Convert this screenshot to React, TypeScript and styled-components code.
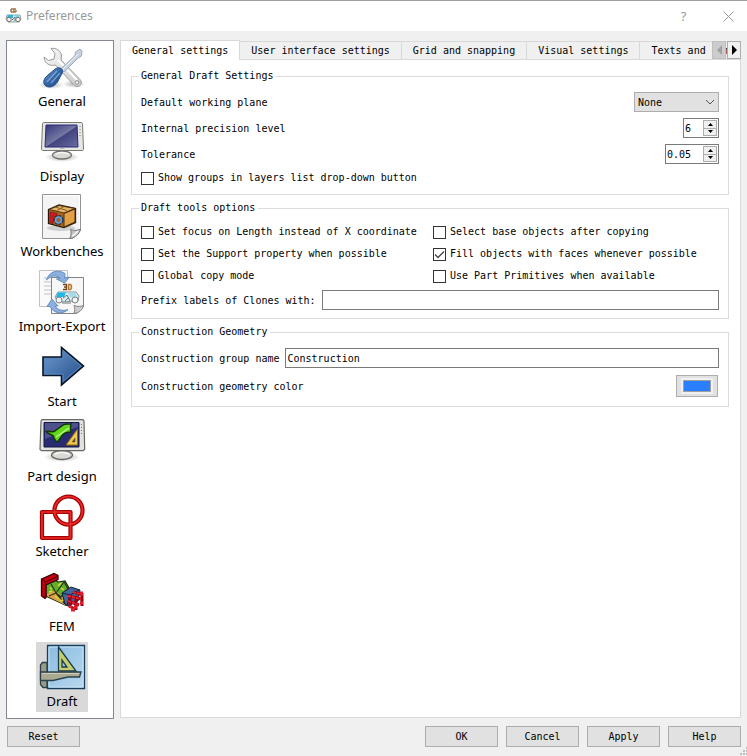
import React, { useState } from "react";
import styled, { createGlobalStyle } from "styled-components";

const mono = `"DejaVu Sans Mono", "Liberation Mono", monospace`;
const ui = `"Noto Sans", "Open Sans", sans-serif`;

const GlobalStyle = createGlobalStyle`
  *, *::before, *::after { box-sizing: border-box; }
  body { margin: 0; background: #f0f0f0; }
  button, input, select { font: inherit; color: inherit; margin: 0; }
`;

const Dialog = styled.div`
  display: flex;
  flex-direction: column;
  min-height: 100vh;
  background: #f0f0f0;
  border-top: 1px solid #a0a0a0;
  color: #000;
  font: 10px/14px ${mono};
`;

const TitleBar = styled.header`
  display: flex;
  align-items: center;
  height: 30px;
  padding: 0 5px;
  background: #fff;
  color: #999;
  font-family: ${ui};
`;

const Title = styled.h1`
  flex: 1;
  margin: 0 0 0 4px;
  font-size: 12px;
  font-weight: 400;
`;

const CaptionButton = styled.button`
  display: flex;
  align-items: center;
  justify-content: center;
  width: 45px;
  height: 28px;
  padding: 0;
  border: 0;
  background: none;
  font-size: 13px;
  &:last-child { width: 28px; margin-left: 8px; }
`;

const Body = styled.main`
  flex: 1;
  display: flex;
  gap: 6px;
  padding: 9px 6px 0;
`;

const Sidebar = styled.nav`
  flex: none;
  display: flex;
  flex-direction: column;
  align-items: center;
  gap: 5px;
  width: 108px;
  padding: 1px 0 6px 4px;
  border: 1px solid #828790;
  background: #fff;
`;

const PageButton = styled.button<{ $active: boolean }>`
  display: flex;
  flex-direction: column;
  align-items: center;
  min-width: 52px;
  height: 70px;
  padding: 2px;
  border: 0;
  background: ${(p) => (p.$active ? "#d9d9d9" : "transparent")};
  font: 13px/18px ${ui};
  white-space: nowrap;
  svg { display: block; flex: none; }
`;

const Main = styled.section`
  flex: 1;
  min-width: 0;
  display: flex;
  flex-direction: column;
  padding-bottom: 1px;
`;

const TabStrip = styled.div`
  position: relative;
`;

const TabList = styled.div`
  display: flex;
  align-items: flex-end;
  height: 20px;
  margin-bottom: -1px;
  overflow: hidden;
`;

const Tab = styled.button<{ $active: boolean }>`
  flex: none;
  height: ${(p) => (p.$active ? 20 : 18)}px;
  margin-bottom: ${(p) => (p.$active ? 0 : 1)}px;
  padding: 0 11px;
  border: 1px solid #d9d9d9;
  border-width: ${(p) => (p.$active ? "1px 1px 0 1px" : "1px 1px 0 0")};
  background: ${(p) => (p.$active ? "#fff" : "#f0f0f0")};
  z-index: ${(p) => (p.$active ? 1 : 0)};
`;

const TabScroll = styled.div`
  position: absolute;
  top: 1px;
  right: 0;
  display: flex;
  gap: 1px;
`;

const ScrollButton = styled.button`
  display: flex;
  align-items: center;
  justify-content: center;
  width: 14px;
  height: 18px;
  padding: 0;
  border: 1px solid #adadad;
  background: #f0f0f0;
  &:disabled { background: #ccc; border-color: #bfbfbf; color: #a0a0a0; }
`;

const TabPane = styled.div`
  flex: 1;
  display: flex;
  flex-direction: column;
  gap: 6px;
  padding: 9px 11px 10px 10px;
  border: 1px solid #d9d9d9;
  background: #fff;
`;

const Group = styled.fieldset`
  min-width: 0;
  margin: 0;
  padding: 9px 9px 8px;
  border: 1px solid #dcdcdc;
`;

const Legend = styled.legend`
  margin-left: -2px;
  padding: 0 3px 0 2px;
`;

const Rows = styled.div`
  display: flex;
  flex-direction: column;
  gap: 6px;
`;

const Row = styled.div<{ $height?: number }>`
  display: flex;
  align-items: center;
  gap: 6px;
  min-height: ${(p) => p.$height ?? 20}px;
`;

const FieldLabel = styled.label<{ $grow?: boolean }>`
  flex: ${(p) => (p.$grow ? "1" : "none")};
  padding-top: 1px;
`;

const CheckGrid = styled.div`
  display: grid;
  grid-template-columns: 1fr 1fr;
  gap: 6px;
`;

const CheckLabel = styled.label`
  display: flex;
  align-items: center;
  gap: 4px;
  height: 16px;
  white-space: nowrap;
`;

const checkMark = `url("data:image/svg+xml,%3Csvg xmlns='http://www.w3.org/2000/svg' viewBox='0 0 11 11'%3E%3Cpath d='M1 5.5l3 3 6-6' fill='none' stroke='%23444' stroke-width='1.3'/%3E%3C/svg%3E")`;

const CheckBox = styled.input`
  appearance: none;
  flex: none;
  width: 13px;
  height: 13px;
  border: 1px solid #333;
  background: #fff;
  &:checked { background-image: ${checkMark}; }
`;

const TextBox = styled.input`
  flex: 1;
  min-width: 0;
  height: 20px;
  padding: 0 1px;
  border: 1px solid #7a7a7a;
  border-radius: 0;
  background: #fff;
  outline: 0;
`;

const SelectWrap = styled.div`
  position: relative;
  svg { position: absolute; right: 4px; top: 7px; pointer-events: none; }
`;

const Select = styled.select`
  display: block;
  appearance: none;
  width: 85px;
  height: 20px;
  padding: 1px 18px 0 3px;
  border: 1px solid #adadad;
  border-radius: 0;
  background: #e1e1e1;
`;

const SpinFrame = styled.div<{ $wide?: boolean }>`
  display: flex;
  width: ${(p) => (p.$wide ? 54 : 36)}px;
  height: 20px;
  padding: 1px;
  border: 1px solid #7a7a7a;
  background: #fff;
`;

const SpinInput = styled.input`
  appearance: textfield;
  flex: 1;
  min-width: 0;
  padding: 1px 0 0;
  border: 0;
  background: none;
  outline: 0;
  &::-webkit-inner-spin-button { appearance: none; margin: 0; }
`;

const SpinButtons = styled.div`
  display: flex;
  flex-direction: column;
  width: 14px;
`;

const SpinButton = styled.button`
  flex: 1;
  display: flex;
  align-items: center;
  justify-content: center;
  min-height: 0;
  padding: 0;
  border: 1px solid #adadad;
  background: #f0f0f0;
  & + & { border-top: 0; }
`;

const ColorButton = styled.button`
  width: 42px;
  height: 22px;
  margin-right: 1px;
  padding: 2px 4px;
  border: 1px solid #adadad;
  background: #e1e1e1;
`;

const Swatch = styled.span`
  display: block;
  height: 16px;
  border: 2px solid #f0f0f0;
  background: #2a7fff;
  box-shadow: inset 0 0 0 1px #a0a0a0;
`;

const Footer = styled.footer`
  position: relative;
  display: flex;
  gap: 8px;
  padding: 7px 6px 9px 7px;
`;

const PushButton = styled.button`
  width: 73px;
  height: 21px;
  padding: 1px 0 0;
  border: 1px solid #adadad;
  background: #e1e1e1;
  &:first-child { margin-right: auto; }
`;

const Grip = styled.svg`
  position: absolute;
  right: 0;
  bottom: 1px;
`;

const Caption = () => (
  <svg width="17" height="16" viewBox="0 0 17 16" aria-hidden="true">
    <path d="M6 1h5M6 4h5M6 1v3M9 1v3M11 2v2" stroke="#9b7745" fill="none" strokeWidth="1.4" />
    <path d="M2 7h13l1 4-2 3H3l-2-3z" fill="#d5ecf2" stroke="#999f9f" />
    <path d="M3 7h5v3H2z" fill="#25b7dd" />
    <path d="M10 7h4v3h-3z" fill="#79cfe4" />
    <circle cx="4" cy="11.5" r="2.2" fill="#f3f3f3" stroke="#77736d" />
    <circle cx="13" cy="11.5" r="2.2" fill="#f3f3f3" stroke="#77736d" />
    <path d="M7 12l3-3v4" stroke="#68747b" fill="none" />
  </svg>
);

const GeneralIcon = () => (
  <>
    <defs>
      <linearGradient id="steel" x1="0" y1="0" x2="1" y2="1"><stop stopColor="#fafafa" /><stop offset="1" stopColor="#c9c9c9" /></linearGradient>
      <linearGradient id="grip" x1="0" y1="0" x2="1" y2="1"><stop stopColor="#7ea9da" /><stop offset=".5" stopColor="#3465a4" /><stop offset="1" stopColor="#204a87" /></linearGradient>
      <radialGradient id="shade"><stop stopColor="#555" stopOpacity=".45" /><stop offset="1" stopColor="#555" stopOpacity="0" /></radialGradient>
    </defs>
    <ellipse cx="13" cy="41" rx="13" ry="4" fill="url(#shade)" />
    <ellipse cx="36" cy="40" rx="11" ry="4" fill="url(#shade)" />
    <path d="M13 4.500c5-1 10 2 10.500 7.500l-.5 4 19 19.500c3 3 .5 7.500-3 7-1.500 0-2.500-1-3.500-2L17.500 21c-5 1.500-11-1-11.500-8l4.500 3.500 5.500-1.500 1-5.500z" fill="url(#steel)" stroke="#999b96" />
    <path d="M20 16l19 20" stroke="#fff" strokeWidth="2" />
    <circle cx="39" cy="38.500" r="1.700" fill="#fff" stroke="#888a85" />
    <path d="M23 25L37 11.500l.5-3.500L42 5l2 2-.5 5-3.500 2L26 28z" fill="#cad4de" stroke="#9aa8b8" />
    <path d="M25 25L40 10" stroke="#eef2f5" />
    <path d="M16 26c3-3 6-2.500 7.500-1s1.500 4-1 7l-3 6c-4 5-8 6-11.500 4-3.500-2.500-3-7 2-11z" fill="url(#grip)" stroke="#204a87" />
    <path d="M9 38l10-11M13 39l9-10" stroke="#91b6e1" strokeWidth="1.300" opacity=".75" />
  </>
);

const DisplayIcon = () => (
  <>
    <defs>
      <linearGradient id="screen" x1="0" y1="0" x2="1" y2="1"><stop stopColor="#33377c" /><stop offset=".5" stopColor="#7578a3" /><stop offset=".52" stopColor="#42457f" /><stop offset="1" stopColor="#6a6ca0" /></linearGradient>
      <radialGradient id="screen-shade"><stop stopColor="#555" stopOpacity=".5" /><stop offset="1" stopColor="#555" stopOpacity="0" /></radialGradient>
    </defs>
    <ellipse cx="24" cy="38" rx="17" ry="5" fill="url(#screen-shade)" />
    <path d="M20 30h8v4h-8z" fill="#aaa" stroke="#70726d" />
    <ellipse cx="24" cy="36" rx="9.500" ry="4" fill="#d8dad5" stroke="#70726d" strokeWidth="1.300" />
    <path d="M18 35c3-2 9-2 12 0" fill="none" stroke="#f9f9f9" strokeWidth="1.500" />
    <path d="M6 3.500h37c1 0 1.500.5 1.500 1.500l1 25c0 1-.5 1.500-1.500 1.500H5c-1 0-1.500-.5-1.500-1.500l1-25c0-1 .5-1.500 1.500-1.500z" fill="#e6e6e2" stroke="#777972" />
    <path d="M8 6h31l1 22H7z" fill="url(#screen)" stroke="#2b2b78" />
    <path d="M42 7v10" stroke="#888" strokeDasharray="1 2" />
    <path d="M22 29.500h4" stroke="#bbb" />
  </>
);

const WorkbenchIcon = () => (
  <>
    <path d="M4.500.5h38v36l-8 8h-30z" fill="#f4f4f4" stroke="#949494" />
    <path d="M5.500 1.500h36v34" fill="none" stroke="#fff" />
    <path d="M31.500 44.500c2-3 2-6 1-9 4 1.500 7 1 10-.5-1 5-5 9-11 9.500z" fill="#c1c3c4" stroke="#777" />
    <path d="M34 42c2-1 4-3 6-5" stroke="#f8f8f8" strokeWidth="1.500" fill="none" />
    <ellipse cx="23" cy="34" rx="14" ry="3" fill="#999" opacity=".4" />
    <path d="M10.500 15.500L21 11l16.500 3.500v14L26 33.500l-15.500-4z" fill="#c87c29" stroke="#241907" strokeWidth="1.300" />
    <path d="M11 16l15 3.500V33l-15-4z" fill="#a9641d" />
    <path d="M11 15.500L21 11.500l16 3-11 4.500z" fill="#e6b568" stroke="#49300d" />
    <path d="M26 19.500l11-4.500v13l-11 5z" fill="#e3a044" stroke="#49300d" />
    <path d="M17 13l12 3.500M26 12.500l-7 4" stroke="#8b5c21" />
    <path d="M12 18l7 1.500v3l-4-.5v2l3 .5v2.500l-3-.5v3l-3-.8z" fill="#d71920" stroke="#651010" strokeWidth=".6" />
    <circle cx="20.500" cy="26" r="3.500" fill="none" stroke="#152b51" strokeWidth="3" strokeDasharray="2.400 .8" />
    <circle cx="20.500" cy="26" r="2.900" fill="none" stroke="#739fcf" strokeWidth="1.800" />
  </>
);

const ImportIcon = () => (
  <>
    <path d="M1.500 1.500h28v36h-28z" fill="#fafafa" stroke="#c2c2c2" />
    <path d="M6 9h14M6 13h14M6 17h8M6 21h8M6 25h8" stroke="#ddd" strokeWidth="2" />
    <path d="M13.500 8.500h32v29l-7 7h-25z" fill="#f7f7f7" stroke="#838383" />
    <path d="M36 44.500c1-3 1-5 0-8 4 1.500 7 1 9.500 0-1 4-4 7.500-9.500 8z" fill="#ccc" stroke="#838383" />
    <path d="M25 15.500h3.500v5H25M26 18h2.500" stroke="#6d441c" strokeWidth="1.300" fill="none" />
    <path d="M30.500 15.500h2l1 1v3l-1 1h-2z" stroke="#b07a35" strokeWidth="1.300" fill="#f3c98b" />
    <path d="M20 23l18 0 3 4-1 5-20 1-3-5z" fill="#d5eef5" stroke="#8b9798" />
    <path d="M20 23.500h8l-2 4.500h-8z" fill="#20b9e7" />
    <path d="M30 23.500h7l2 4-7 1z" fill="#a5dcea" />
    <circle cx="21" cy="31" r="3" fill="#f4f4f4" stroke="#7d7d7d" />
    <circle cx="37" cy="31" r="3" fill="#f4f4f4" stroke="#7d7d7d" />
    <path d="M25 29l4-3 3 6M27 32l4-4M24 34h9" stroke="#6c7476" fill="none" />
    <path d="M8.500 11C11 3 19-.5 27 4.500l-.5 4.500 5-1-5 6-8-4 4-.5C18 5 12 7 8.500 11z" fill="#8bb0df" stroke="#658fc3" />
    <path d="M30 40.500c-5 5-14 4.500-18-3h-3l5-7.500 6 7h-3c2 4 8 5.500 13 3.500z" fill="#8bb0df" stroke="#658fc3" />
  </>
);

const StartIcon = () => (
  <>
    <defs><linearGradient id="arrow" x1="0" y1="0" x2="1" y2="1"><stop stopColor="#6f9cd0" /><stop offset="1" stopColor="#204a87" /></linearGradient></defs>
    <path d="M5 13h18.500V3.500L45.500 22l-22 19v-9.500H5z" fill="url(#arrow)" stroke="#0b1521" strokeWidth="1.600" />
    <path d="M6.500 14.500H25V7l18 15-18 15.500V30H6.500z" fill="none" stroke="#5485bf" />
  </>
);

const PartDesignIcon = () => (
  <>
    <defs><radialGradient id="pds"><stop stopColor="#555" stopOpacity=".5" /><stop offset="1" stopColor="#555" stopOpacity="0" /></radialGradient></defs>
    <ellipse cx="24" cy="38" rx="18" ry="5" fill="url(#pds)" />
    <path d="M20 31h8v4h-8z" fill="#aaa" stroke="#70726d" />
    <ellipse cx="24" cy="36" rx="10.500" ry="4.500" fill="#d8dad5" stroke="#666862" strokeWidth="1.300" />
    <path d="M17 35c4-2 10-2 14 0" fill="none" stroke="#fafafa" strokeWidth="1.500" />
    <path d="M4 .7h41l1 1.500.7 28-1.500 1.500H3.500L2 30.500l1-28z" fill="#e2e3df" stroke="#666862" strokeWidth="1.200" />
    <path d="M6 3.500h35V28H6z" fill="#292c72" stroke="#151746" />
    <path d="M7 20L40 8v-4H7z" fill="#7476a4" opacity=".5" />
    <path d="M8 12.500c3-1 5 1 8 0l10-7c3-1 5 0 7-.5-1 3 0 5-.5 8-4 0-6 1-8 3l-5 7c-2-1-4-4-4-6-2-2-5-2-7.500-4.500z" fill="#63d719" stroke="#123700" strokeWidth="1.400" />
    <path d="M18 18l13-9" stroke="#b9f794" strokeWidth="1.500" />
    <path d="M28 26l11.500-16v16z" fill="#efc94a" stroke="#8e6b10" />
    <path d="M34 23l3-4v4z" fill="#292c72" stroke="#8e6b10" strokeWidth=".7" />
    <path d="M43.500 5v12" stroke="#777" strokeDasharray="1 2" />
  </>
);

const SketcherIcon = () => (
  <g fill="none">
    <g stroke="#a40000" strokeWidth="4.200" strokeLinejoin="round">
      <path d="M4 18h28.500v26H4z" /><circle cx="30.500" cy="16.500" r="14" />
    </g>
    <g stroke="#ef2929" strokeWidth="1.700" strokeLinejoin="round">
      <path d="M4 18h28.500v26H4z" /><circle cx="30.500" cy="16.500" r="14" />
    </g>
  </g>
);

const FemIcon = () => (
  <>
    <path d="M8 16l8-5 4 2 7-1 4 7 1 18-5-1-19-9z" fill="#64ad2c" stroke="#1d2b16" strokeWidth="1.200" />
    <path d="M9 25l8-4 10 10v5l-18-9z" fill="#e0a04a" />
    <path d="M13 15l5 9-7 3M18 24l8-11 4 7-7 8zM18 24l9 11" fill="none" stroke="#243719" strokeWidth="1.200" />
    <path d="M12 19l2 1M11 23l3-1M20 17l3-3M17 27l4 3M23 19l3 2M22 31l3 1" stroke="#d5e235" strokeWidth="1.500" />
    <path d="M3.500 10L16 4.500l4 2v4L8 16v12.500l-1 1-3.500-2.500z" fill="#c4000d" stroke="#330308" strokeWidth="1.300" />
    <path d="M4 10l3.500 3v15M7.500 13L20 7" stroke="#5e050b" fill="none" strokeWidth="1.300" />
    <path d="M24 24l9-6 9 3-2 11-10 5-3-2z" fill="#41669c" stroke="#142039" />
    <path d="M24 24l8 2 9-5M32 26l-3 10" fill="none" stroke="#142039" />
    <path d="M30 27l13 3M30 32l11 4M31 37l6 3M35 23l10 3M44 24v13M38 27v14M32 29v9" stroke="#99000d" strokeWidth="3" />
    <path d="M30 27l13 3M30 32l11 4M31 37l6 3M35 23l10 3" stroke="#ef2435" strokeWidth="1.800" strokeDasharray="3 1" />
    <path d="M42 24h3M42 34h3M36 38h3M33 41h4" stroke="#df1c2c" strokeWidth="3" />
  </>
);

const DraftIcon = () => (
  <>
    <defs><linearGradient id="board" x1="0" y1="0" x2="1" y2="1"><stop stopColor="#8bbbe0" /><stop offset="1" stopColor="#b8d8ee" /></linearGradient></defs>
    <path d="M9.500 1.500h37v43h-37z" fill="url(#board)" stroke="#173d5d" strokeWidth="1.300" />
    <path d="M11 3h34v40H11z" fill="none" stroke="#c4e1f4" />
    <path fillRule="evenodd" d="M20.500 3L38 27H20.500zM24 16v7h5z" fill="#c5cc72" stroke="#193d49" strokeWidth="1.300" />
    <path d="M2.500 21l2-2.500h4.500v25H5l-2.500-3z" fill="#999b87" stroke="#2c424b" strokeWidth="1.300" />
    <path d="M2.500 28h40.500l-1.500 5H30l-15 3.500H2.500z" fill="#aaa991" stroke="#2c424b" strokeWidth="1.300" />
    <path d="M4 29.500h37" stroke="#d0cebb" />
  </>
);

const pages: [string, () => React.ReactElement][] = [
  ["General", GeneralIcon],
  ["Display", DisplayIcon],
  ["Workbenches", WorkbenchIcon],
  ["Import-Export", ImportIcon],
  ["Start", StartIcon],
  ["Part design", PartDesignIcon],
  ["Sketcher", SketcherIcon],
  ["FEM", FemIcon],
  ["Draft", DraftIcon],
];

const tabs = ["General settings", "User interface settings", "Grid and snapping", "Visual settings", "Texts and dimensions"];

const Triangle = ({ d, w, h }: { d: string; w: number; h: number }) => (
  <svg width={w} height={h} viewBox={`0 0 ${w} ${h}`} aria-hidden="true"><path d={d} fill="currentColor" /></svg>
);

const Spin = ({ id, initial, step, digits, wide }: { id: string; initial: string; step: number; digits: number; wide?: boolean }) => {
  const [value, setValue] = useState(initial);
  const move = (n: number) => setValue((Number(value) + n * step).toFixed(digits));
  return (
    <SpinFrame $wide={wide}>
      <SpinInput id={id} type="number" step={step} value={value} onChange={(e) => setValue(e.target.value)} />
      <SpinButtons>
        <SpinButton type="button" aria-label="Increase" onClick={() => move(1)}><Triangle w={5} h={3} d="M0 3L2.500 0 5 3z" /></SpinButton>
        <SpinButton type="button" aria-label="Decrease" onClick={() => move(-1)}><Triangle w={5} h={3} d="M0 0h5L2.500 3z" /></SpinButton>
      </SpinButtons>
    </SpinFrame>
  );
};

const Check = ({ text, checked }: { text: string; checked?: boolean }) => (
  <CheckLabel><CheckBox type="checkbox" defaultChecked={checked} />{text}</CheckLabel>
);

export default function App() {
  const [page, setPage] = useState("Draft");
  const [tab, setTab] = useState(tabs[0]);
  return (
    <>
      <GlobalStyle />
      <Dialog>
        <TitleBar>
          <Caption />
          <Title>Preferences</Title>
          <CaptionButton type="button" aria-label="What's this">?</CaptionButton>
          <CaptionButton type="button" aria-label="Close">
            <svg width="11" height="11" viewBox="0 0 11 11"><path d="M.5.5l10 10M10.500.5l-10 10" stroke="#999" /></svg>
          </CaptionButton>
        </TitleBar>
        <Body>
          <Sidebar>
            {pages.map(([name, Icon]) => (
              <PageButton key={name} type="button" $active={name === page} onClick={() => setPage(name)}>
                <svg width="48" height="48" viewBox="0 0 48 48" aria-hidden="true"><Icon /></svg>
                {name}
              </PageButton>
            ))}
          </Sidebar>
          <Main>
            <TabStrip>
              <TabList role="tablist">
                {tabs.map((t) => (
                  <Tab key={t} type="button" role="tab" aria-selected={t === tab} $active={t === tab} onClick={() => setTab(t)}>{t}</Tab>
                ))}
              </TabList>
              <TabScroll>
                <ScrollButton type="button" disabled aria-label="Scroll tabs left"><Triangle w={5} h={10} d="M5 0v10L0 5z" /></ScrollButton>
                <ScrollButton type="button" aria-label="Scroll tabs right"><Triangle w={5} h={10} d="M0 0v10l5-5z" /></ScrollButton>
              </TabScroll>
            </TabStrip>
            <TabPane>
              <Group>
                <Legend>General Draft Settings</Legend>
                <Rows>
                  <Row>
                    <FieldLabel $grow htmlFor="plane">Default working plane</FieldLabel>
                    <SelectWrap>
                      <Select id="plane"><option>None</option></Select>
                      <svg width="10" height="6" viewBox="0 0 10 6"><path d="M1 1l4 4 4-4" fill="none" stroke="#555" /></svg>
                    </SelectWrap>
                  </Row>
                  <Row>
                    <FieldLabel $grow htmlFor="precision">Internal precision level</FieldLabel>
                    <Spin id="precision" initial="6" step={1} digits={0} />
                  </Row>
                  <Row>
                    <FieldLabel $grow htmlFor="tolerance">Tolerance</FieldLabel>
                    <Spin id="tolerance" initial="0.05" step={0.01} digits={2} wide />
                  </Row>
                  <Check text="Show groups in layers list drop-down button" />
                </Rows>
              </Group>
              <Group>
                <Legend>Draft tools options</Legend>
                <Rows>
                  <CheckGrid>
                    <Check text="Set focus on Length instead of X coordinate" />
                    <Check text="Select base objects after copying" />
                    <Check text="Set the Support property when possible" />
                    <Check text="Fill objects with faces whenever possible" checked />
                    <Check text="Global copy mode" />
                    <Check text="Use Part Primitives when available" />
                  </CheckGrid>
                  <Row>
                    <FieldLabel htmlFor="prefix">Prefix labels of Clones with:</FieldLabel>
                    <TextBox id="prefix" type="text" />
                  </Row>
                </Rows>
              </Group>
              <Group>
                <Legend>Construction Geometry</Legend>
                <Rows>
                  <Row>
                    <FieldLabel htmlFor="group-name">Construction group name</FieldLabel>
                    <TextBox id="group-name" type="text" defaultValue="Construction" />
                  </Row>
                  <Row $height={24}>
                    <FieldLabel $grow htmlFor="color">Construction geometry color</FieldLabel>
                    <ColorButton id="color" type="button"><Swatch /></ColorButton>
                  </Row>
                </Rows>
              </Group>
            </TabPane>
          </Main>
        </Body>
        <Footer>
          {["Reset", "OK", "Cancel", "Apply", "Help"].map((b) => <PushButton key={b} type="button">{b}</PushButton>)}
          <Grip width="7" height="8" viewBox="0 0 7 8" aria-hidden="true">
            <path d="M6 0h1v2H6zM3 3h2v2H3zM6 3h1v2H6zM0 6h2v2H0zM3 6h2v2H3zM6 6h1v2H6z" fill="#bfbfbf" />
          </Grip>
        </Footer>
      </Dialog>
    </>
  );
}
